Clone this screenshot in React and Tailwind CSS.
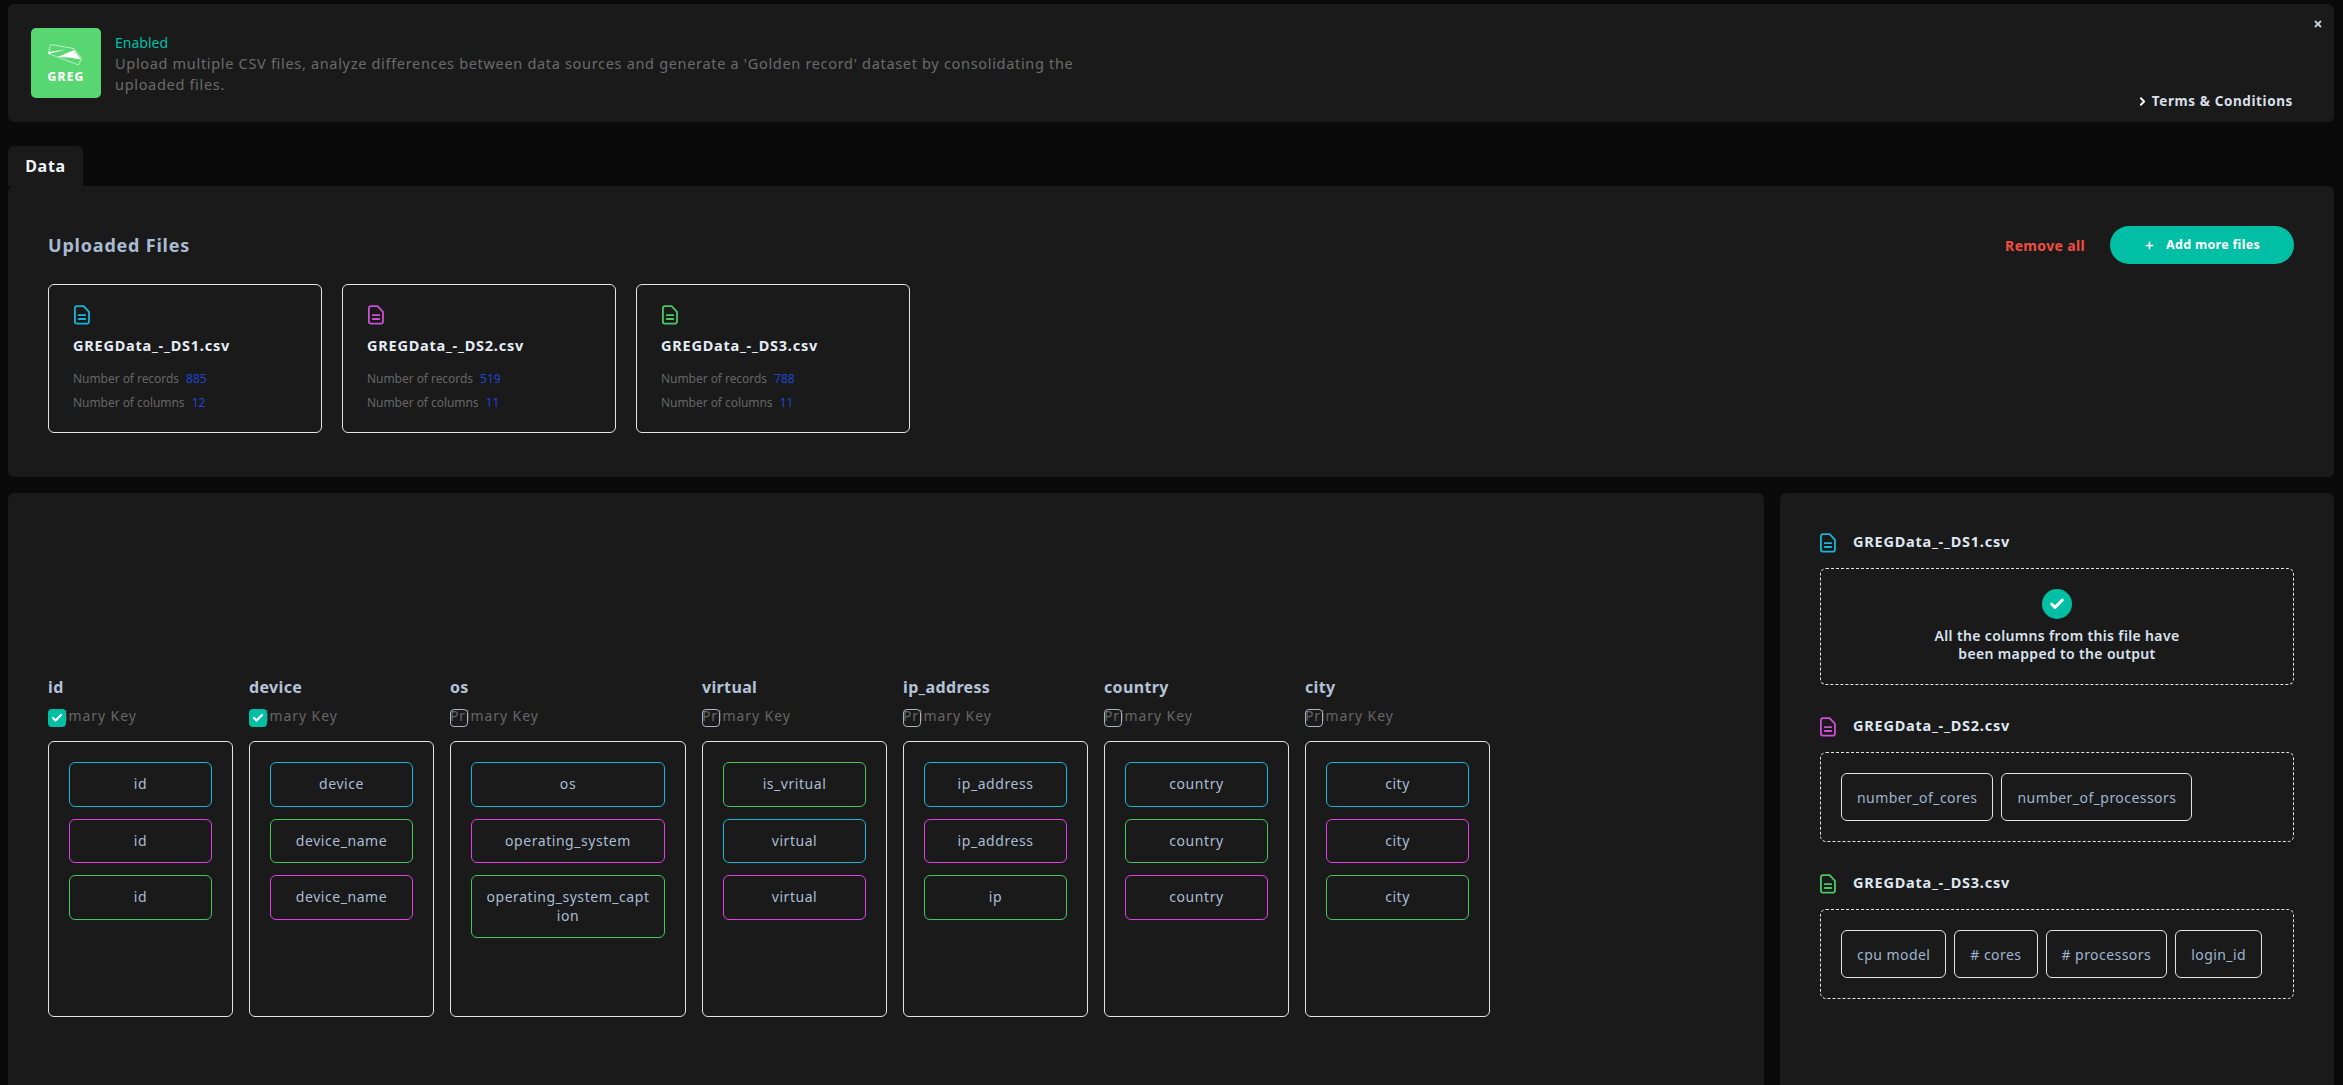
import React from 'react';
import { Plus, ChevronRight, X, Check } from 'lucide-react';

const FONT = 'font-["Noto_Sans",sans-serif]';

const FileIcon = ({ className }) => (
  <svg viewBox="0 0 16 20" width="16" height="20" fill="none" className={className} stroke="currentColor" strokeWidth="1.8" strokeLinejoin="round" strokeLinecap="round">
    <path d="M3 1.2h6.6L15 6.8V16.5a2.2 2.2 0 0 1-2.2 2.2H3a2.2 2.2 0 0 1-2.1-2.2V3.3A2.2 2.2 0 0 1 3 1.2z" />
    <path d="M4.8 10.2h6.4M4.8 14h6.4" />
  </svg>
);

const GregLogo = () => (
  <div className="flex h-[70px] w-[70px] shrink-0 flex-col items-center rounded-[5px] bg-[#57d672] pt-2">
    <svg viewBox="0 0 40 30" width="40" height="30" fill="none">
      <path d="M4.5 8.5 28 12.5 35.5 22.5 32.5 29 2.5 17.5z" stroke="#fff" strokeOpacity="0.75" strokeWidth="0.8" />
      <path d="M2 18 20 13.5 2.5 16z" fill="#fff" />
      <path d="M11.5 21 28 14 35 23.5 23 21.5z" fill="#fff" />
    </svg>
    <span className="mt-[3px] text-[12px] leading-[16px] font-extrabold tracking-[1.2px] text-white">GREG</span>
  </div>
);

const files = [
  { name: 'GREGData_-_DS1.csv', records: 885, columns: 12, color: 'text-[#17b6d8]' },
  { name: 'GREGData_-_DS2.csv', records: 519, columns: 11, color: 'text-[#cf4fd8]' },
  { name: 'GREGData_-_DS3.csv', records: 788, columns: 11, color: 'text-[#4cc765]' },
];

const cyan = 'border-[#17b6d8]';
const pink = 'border-[#e040e4]';
const green = 'border-[#45c55a]';

const mapping = [
  { title: 'id', checked: true, width: 'w-[185px]', items: [['id', cyan], ['id', pink], ['id', green]] },
  { title: 'device', checked: true, width: 'w-[185px]', items: [['device', cyan], ['device_name', green], ['device_name', pink]] },
  { title: 'os', width: 'w-[236px]', items: [['os', cyan], ['operating_system', pink], ['operating_system_caption', green]] },
  { title: 'virtual', width: 'w-[185px]', items: [['is_vritual', green], ['virtual', cyan], ['virtual', pink]] },
  { title: 'ip_address', width: 'w-[185px]', items: [['ip_address', cyan], ['ip_address', pink], ['ip', green]] },
  { title: 'country', width: 'w-[185px]', items: [['country', cyan], ['country', green], ['country', pink]] },
  { title: 'city', width: 'w-[185px]', items: [['city', cyan], ['city', pink], ['city', green]] },
];

const FileCard = ({ file }) => (
  <div className="h-[149px] w-[274px] rounded-[6px] border border-[#e4e4e4] px-[24px] pt-[20px]">
    <FileIcon className={`ml-px ${file.color}`} />
    <div className="mt-[10px] text-[14.5px] leading-[20px] font-bold tracking-[0.75px] text-[#e6edf7]">{file.name}</div>
    <div className="mt-[16px] flex flex-col gap-[8px] text-[12px] leading-[16px] tracking-[-0.05px] text-[#666666]">
      <div>Number of records <span className="ml-[4px] text-[#1e46d2]">{file.records}</span></div>
      <div>Number of columns <span className="ml-[4px] text-[#1e46d2]">{file.columns}</span></div>
    </div>
  </div>
);

const MappingColumn = ({ col }) => (
  <div className={col.width}>
    <div className="text-[16px] leading-[22px] font-bold tracking-[0.35px] text-[#b4c3d8]">{col.title}</div>
    <div className="relative mt-[11px] h-[18px] text-[14px] leading-[14px] tracking-[0.9px] whitespace-nowrap text-[#666666]">
      Primary Key
      {col.checked ? (
        <span className="absolute top-0 left-0 flex h-[18px] w-[18px] items-center justify-center rounded-[4px] bg-[#00bfa5]">
          <Check size={12} strokeWidth={4.5} className="text-white" />
        </span>
      ) : (
        <span className="absolute top-0 left-0 h-[18px] w-[18px] rounded-[4px] border border-[#a9b4c4]" />
      )}
    </div>
    <div className="mt-[14px] flex h-[276px] flex-col gap-[12px] rounded-[6px] border border-[#e4e4e4] px-[20px] pt-[20px]">
      {col.items.map(([label, border], i) => (
        <div key={i} className={`rounded-[6px] border px-[14px] py-[12px] text-center text-[14px] leading-[18.5px] tracking-[0.55px] break-all text-[#a9bdd6] ${border}`}>
          {label}
        </div>
      ))}
    </div>
  </div>
);

const Chip = ({ children }) => (
  <div className="flex h-[48px] items-center rounded-[6px] border border-[#e4e4e4] px-[15px] text-[14px] tracking-[0.45px] text-[#9fb5d0]">
    {children}
  </div>
);

const SourceTitle = ({ file }) => (
  <div className="flex h-[20px] items-center gap-[17px]">
    <FileIcon className={file.color} />
    <span className="pb-[2px] text-[14.5px] font-bold tracking-[0.75px] text-[#dfe7f2]">{file.name}</span>
  </div>
);

const App = () => {
  return (
    <div className={`flex h-[1085px] flex-col overflow-hidden bg-[#0a0a0a] pt-[4px] pr-[9px] pl-[8px] ${FONT}`}>
      <section className="relative flex h-[118px] shrink-0 rounded-[6px] bg-[#1a1a1a] pt-[24px] pr-[41px] pl-[23px]">
        <GregLogo />
        <div className="ml-[14px] w-[975px] pt-[5px]">
          <div className="text-[14px] leading-[20px] text-[#00bfa5]">Enabled</div>
          <p className="text-[14.5px] leading-[21px] tracking-[0.68px] text-[#6b6b6b]">
            Upload multiple CSV files, analyze differences between data sources and generate a 'Golden record' dataset by consolidating the uploaded files.
          </p>
        </div>
        <a className="mt-[63px] ml-auto flex h-[20px] items-center gap-[3px] text-[13.5px] font-bold tracking-[0.6px] text-[#d9dfe9]">
          <ChevronRight size={13} strokeWidth={3.5} className="text-white" />
          Terms &amp; Conditions
        </a>
        <X size={10} strokeWidth={4.5} className="absolute top-[15px] right-[11px] text-[#c4cbd6]" />
      </section>

      <div className="mt-[24px] flex h-[40px] w-[75px] shrink-0 items-center justify-center rounded-t-[6px] bg-[#1a1a1a] text-[16px] font-bold tracking-[0.7px] text-[#f2f5fa]">
        Data
      </div>

      <section className="h-[291px] shrink-0 rounded-[6px] bg-[#1a1a1a] px-[40px] pt-[40px]">
        <div className="flex h-[38px] items-center">
          <h2 className="text-[18px] font-bold tracking-[0.8px] text-[#a9bbd3]">Uploaded Files</h2>
          <button className="mr-[25px] ml-auto text-[14px] font-bold tracking-[0.35px] text-[#f24c42]">Remove all</button>
          <button className="flex h-[38px] w-[184px] items-center justify-center gap-[11px] rounded-full bg-[#00bfa5] text-[12.5px] font-bold tracking-[0.3px] text-white">
            <Plus size={11} strokeWidth={3.5} />
            Add more files
          </button>
        </div>
        <div className="mt-[20px] flex gap-[20px]">
          {files.map((file) => <FileCard key={file.name} file={file} />)}
        </div>
      </section>

      <div className="mt-[16px] flex min-h-0 flex-1 gap-[16px]">
        <section className="flex w-[1756px] gap-[16px] rounded-t-[6px] bg-[#1a1a1a] pt-[183px] pl-[40px]">
          {mapping.map((col) => <MappingColumn key={col.title} col={col} />)}
        </section>

        <aside className="flex-1 rounded-t-[6px] bg-[#1a1a1a] pt-[40px] pl-[40px]">
          <SourceTitle file={files[0]} />
          <div className="mt-[15px] flex h-[117px] w-[474px] flex-col items-center rounded-[6px] border border-dashed border-[#e4e4e4] pt-[20px]">
            <span className="flex h-[30px] w-[30px] items-center justify-center rounded-full bg-[#00bfa5]">
              <Check size={16} strokeWidth={4.5} className="text-white" />
            </span>
            <p className="mt-[8px] text-center text-[14px] leading-[18px] font-semibold tracking-[0.35px] text-[#dbe3ef]">
              All the columns from this file have
              <br />
              been mapped to the output
            </p>
          </div>

          <div className="mt-[32px]"><SourceTitle file={files[1]} /></div>
          <div className="mt-[15px] flex h-[90px] w-[474px] items-center gap-[8px] rounded-[6px] border border-dashed border-[#e4e4e4] px-[20px]">
            <Chip>number_of_cores</Chip>
            <Chip>number_of_processors</Chip>
          </div>

          <div className="mt-[32px]"><SourceTitle file={files[2]} /></div>
          <div className="mt-[15px] flex h-[90px] w-[474px] items-center gap-[8px] rounded-[6px] border border-dashed border-[#e4e4e4] px-[20px]">
            <Chip>cpu model</Chip>
            <Chip># cores</Chip>
            <Chip># processors</Chip>
            <Chip>login_id</Chip>
          </div>
        </aside>
      </div>
    </div>
  );
};

export default App;
